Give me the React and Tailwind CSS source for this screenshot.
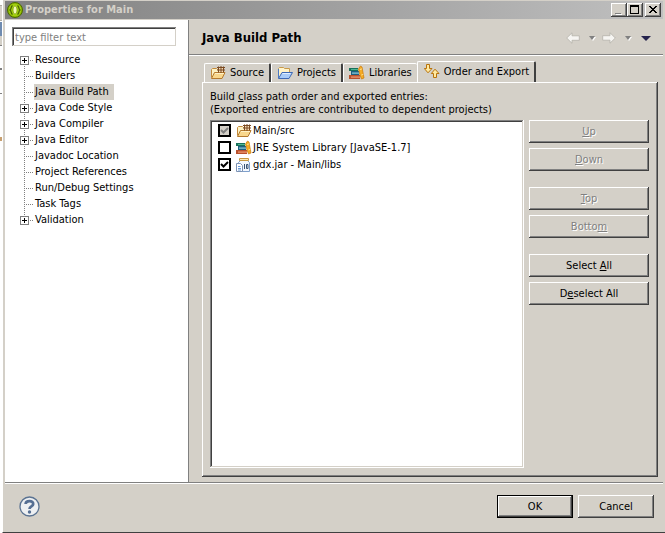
import React, { useState } from 'react';

const raised = 'shadow-[inset_-1px_-1px_#404040,inset_1px_1px_#ffffff,inset_-2px_-2px_#808080]';
const sunken = 'shadow-[inset_-1px_-1px_#ffffff,inset_1px_1px_#808080,inset_-2px_-2px_#d4d0c8,inset_2px_2px_#404040]';

const pages = [
  { name: 'Resource', expandable: true },
  { name: 'Builders' },
  { name: 'Java Build Path' },
  { name: 'Java Code Style', expandable: true },
  { name: 'Java Compiler', expandable: true },
  { name: 'Java Editor', expandable: true },
  { name: 'Javadoc Location' },
  { name: 'Project References' },
  { name: 'Run/Debug Settings' },
  { name: 'Task Tags' },
  { name: 'Validation', expandable: true },
];

const AppIcon = () => (
  <svg width="16" height="16" viewBox="0 0 16 16" aria-hidden="true">
    <circle cx="8" cy="8" r="7.5" fill="#8db600" stroke="#4d6b00" />
    <circle cx="8" cy="8" r="6.2" fill="#a4d210" />
    <path d="M5.6 3.6C3.6 4.2 4.8 6.8 3 8c1.8 1.2 .6 3.8 2.6 4.4M10.4 3.6C12.4 4.2 11.2 6.8 13 8c-1.8 1.2-.6 3.8-2.6 4.4" fill="none" stroke="#4a6600" strokeWidth="1.3" />
    <ellipse cx="8" cy="8" rx="2" ry="4" fill="#f4fbb0" stroke="#6a8c00" strokeWidth=".6" />
  </svg>
);

const SourceIcon = () => (
  <svg width="16" height="16" viewBox="0 0 16 16" aria-hidden="true">
    <path d="M1.5 12.5v-8l1-1h4l1 1h5v3" fill="#fdf2c4" stroke="#c48a3a" />
    <path d="M1.5 13.5l3-6h10.5l-3 6z" fill="#f9d78c" stroke="#b57a2e" />
    <path d="M5 8.5h9" stroke="#fff0c4" />
    <path d="M8 2h6v5H8z" fill="#f7dcb6" />
    <path d="M8.5 1.5v6M11 1v7M13.5 1.5v6M7 2.5h8M7 5h8" fill="none" stroke="#7a4a22" />
  </svg>
);

const ProjectIcon = () => (
  <svg width="16" height="16" viewBox="0 0 16 16" aria-hidden="true">
    <path d="M1.5 12.5v-9l1-1h4l1 1h5v4" fill="#fff3c8" stroke="#c99a4a" />
    <path d="M1.5 4v9" stroke="#4c7ac4" />
    <path d="M1.5 13.5l3.5-6h10.5l-3.5 6z" fill="#a9ccf8" stroke="#3d69b5" />
    <path d="M5.5 8.5h8" stroke="#e0eeff" />
  </svg>
);

const LibraryIcon = () => (
  <svg width="16" height="16" viewBox="0 0 16 16" aria-hidden="true">
    <path d="M0 3h9v3H0z" fill="#17705a" />
    <path d="M2 4h7v1H2z" fill="#4fb592" />
    <path d="M2 6h8v4H2z" fill="#1e5f80" />
    <path d="M3 7.5h7v1.2H3z" fill="#8fd0dc" />
    <path d="M0 10h11v4H0z" fill="#b9502c" />
    <path d="M2 11.5h9v1.2H2z" fill="#ee9c74" />
    <path d="M9.5 4l2-3 1.5 1 2 11-2.5 1-1.500-4z" fill="#f5ab24" stroke="#c87808" strokeWidth=".7" />
    <path d="M11 4.5l2-.6M12.3 10l2-.6" stroke="#ffe08c" />
  </svg>
);

const OrderIcon = () => (
  <svg width="16" height="16" viewBox="0 0 16 16" aria-hidden="true">
    <path d="M2.5 .5h3v4h2.5L4 8.8 .3 4.5h2.2z" fill="#ffeaa0" stroke="#b8730c" />
    <path d="M9.5 13.5h3v-4h2.5L11 5.2 7.3 9.5h2.2z" fill="#ffeaa0" stroke="#b8730c" />
  </svg>
);

const JarIcon = () => (
  <svg width="16" height="16" viewBox="0 0 16 16" aria-hidden="true">
    <path d="M4.5 3.5L2.5 5.5v9h11v-9l-2-2z" fill="#f4f8fe" stroke="#7fa0cc" />
    <path d="M3.5 1.5h9v2h-9z" fill="#fdeab4" stroke="#c89840" />
    <path d="M.5 6.5h4l2 2v6h-6z" fill="#ffffff" stroke="#7d93b5" />
    <path d="M2 9.5h2.5M2 11.5h3M2 13h3" stroke="#6b9bd8" />
    <path d="M8.5 7v5M10.500 7.5h1.500v4h-1.500z" fill="none" stroke="#3a5474" />
  </svg>
);

const HelpIcon = () => (
  <svg width="21" height="21" viewBox="0 0 21 21" aria-hidden="true">
    <circle cx="10.5" cy="10.5" r="9.5" fill="#eef0f2" stroke="#5b7392" strokeWidth="1.3" />
    <path d="M6.6 8c.2-4 8-3.8 7.6 .1-.1 2.5-3.7 2.2-3.7 5" fill="none" stroke="#566f93" strokeWidth="2.7" />
    <circle cx="10.5" cy="16" r="1.7" fill="#566f93" />
  </svg>
);

const NavArrow = ({ flip }) => (
  <svg width="14" height="12" viewBox="0 0 14 12" className={flip ? 'rotate-180' : ''} aria-hidden="true">
    <path d="M.7 6L6 .8v3h7.3v4.5H6v3z" fill="#f6f5f2" stroke="#b4b1aa" strokeWidth=".8" />
  </svg>
);

const Caret = () => (
  <svg width="7" height="5" viewBox="0 0 7 5" aria-hidden="true">
    <path d="M1 1h6L4 5z" fill="#ffffff" />
    <path d="M0 0h6L3 4z" fill="#808080" />
  </svg>
);

const TreeGuide = ({ expandable, first, last }) => (
  <svg width="14" height="16" viewBox="0 0 14 16" shapeRendering="crispEdges" aria-hidden="true">
    <path d={first ? 'M4.5 8v8' : last ? 'M4.5 0v8' : 'M4.5 0v16'} stroke="#808080" strokeDasharray="1 1" />
    <path d="M6 8.5h7" stroke="#808080" strokeDasharray="1 1" />
    {expandable && (
      <>
        <rect x=".5" y="4.5" width="8" height="8" fill="#ffffff" stroke="#808080" />
        <path d="M2 8.5h5M4.5 6v5" stroke="#000000" />
      </>
    )}
  </svg>
);

const TitleButton = ({ label, children }) => (
  <button type="button" aria-label={label} className={`flex h-3.5 w-4 items-center justify-center bg-[#d4d0c8] ${raised}`}>
    <svg width="16" height="14" viewBox="0 0 16 14" shapeRendering="crispEdges">{children}</svg>
  </button>
);

const TitleBar = () => (
  <header className="mr-0.5 flex h-[18px] items-center bg-linear-to-r from-[#808080] to-[#c0c0c0] pr-0.5 pl-0.5">
    <AppIcon />
    <h1 className="ml-0.5 flex-1 font-bold text-[#d4d0c8]">Properties for Main</h1>
    <TitleButton label="Minimize">
      <path d="M5 11h6v1H5z" fill="#ffffff" />
      <path d="M4 10h6v1H4z" fill="#808080" />
    </TitleButton>
    <TitleButton label="Maximize">
      <path d="M3.5 3v7.5h8V3M3 3h9" fill="none" stroke="#000000" />
      <path d="M3 2h9v2H3z" fill="#000000" />
    </TitleButton>
    <div className="ml-0.5 flex">
      <TitleButton label="Close">
        <path d="M4 3h2v1h1v1h2V4h1V3h2v1h-1v1h-1v1H9v1h1v1h1v1h1v1h-2V9H9V8H7v1H6v1H4V9h1V8h1V7h1V6H6V5H5V4H4z" fill="#000000" />
      </TitleButton>
    </div>
  </header>
);

const Sidebar = ({ selected, onSelect }) => (
  <aside className="flex w-[184px] shrink-0 flex-col border-r border-[#808080] bg-white pt-[7px] pl-[7px]">
    <input
      type="text"
      aria-label="Filter"
      placeholder="type filter text"
      className={`h-5 w-[165px] bg-white px-[3px] placeholder:text-[#808080] focus:outline-none ${sunken}`}
    />
    <ul className="mt-[5px] pl-2">
      {pages.map((page, i) => (
        <li key={page.name} className="flex h-4">
          <TreeGuide expandable={page.expandable} first={i === 0} last={i === pages.length - 1} />
          <button
            type="button"
            onClick={() => onSelect(page.name)}
            className={`pr-[5px] pl-px whitespace-nowrap ${selected === page.name ? 'bg-[#d4d0c8]' : ''}`}
          >
            {page.name}
          </button>
        </li>
      ))}
    </ul>
  </aside>
);

const Tab = ({ icon, label, active, edge }) => (
  <button
    type="button"
    role="tab"
    aria-selected={!!active}
    className={`flex items-center gap-1 rounded-t-xs border-t border-l border-white pr-[5px] whitespace-nowrap ${
      active ? '-mb-px h-[22px] border-r-2 border-r-[#404040] bg-[#d4d0c8] pb-0.5 pl-1.5' : 'h-[19px] pl-[5px]'
    } ${edge ? 'border-r-2 border-r-[#404040]' : ''}`}
  >
    {icon}
    {label}
  </button>
);

const Check = ({ color }) => (
  <svg width="13" height="13" viewBox="0 0 13 13" className="pointer-events-none absolute inset-0" aria-hidden="true">
    <path d="M3 6l2.5 2.5L10 4" fill="none" stroke={color} strokeWidth="2" />
  </svg>
);

const Entry = ({ icon, label, checked, locked, onToggle }) => (
  <li className="h-[17px]">
    <label className="flex h-[17px] items-center">
      <span className="relative mr-[5px] flex">
        <input
          type="checkbox"
          checked={checked}
          disabled={locked}
          onChange={onToggle}
          className={`size-[13px] appearance-none border-2 border-black ${locked ? 'bg-[#d4d0c8]' : 'bg-white'}`}
        />
        {checked && <Check color={locked ? '#808080' : '#000000'} />}
      </span>
      {icon}
      <span className="ml-px whitespace-nowrap">{label}</span>
    </label>
  </li>
);

const SideButton = ({ children, disabled }) => (
  <button
    type="button"
    disabled={disabled}
    className={`h-[23px] w-[120px] underline-offset-1 disabled:text-[#808080] disabled:text-shadow-[1px_1px_#ffffff] ${raised}`}
  >
    {children}
  </button>
);

const OrderAndExport = () => {
  const [checked, setChecked] = useState({ src: true, jre: false, gdx: true });

  const toggle = (key) => setChecked({ ...checked, [key]: !checked[key] });

  return (
    <section className={`flex flex-1 flex-col pt-2 pr-[9px] pb-[9px] pl-2 ${raised}`}>
      <p className="leading-[13px]">
        Build <u className="underline-offset-1">c</u>lass path order and exported entries:
        <br />
        (Exported entries are contributed to dependent projects)
      </p>
      <div className="mt-1 flex flex-1 gap-[5px]">
        <ul className={`flex-1 bg-white pt-0.5 pl-2 ${sunken}`}>
          <Entry icon={<SourceIcon />} label="Main/src" checked={checked.src} locked />
          <Entry icon={<LibraryIcon />} label="JRE System Library [JavaSE-1.7]" checked={checked.jre} onToggle={() => toggle('jre')} />
          <Entry icon={<JarIcon />} label="gdx.jar - Main/libs" checked={checked.gdx} onToggle={() => toggle('gdx')} />
        </ul>
        <div className="flex flex-col gap-4">
          <div className="flex flex-col gap-[5px]">
            <SideButton disabled><u>U</u>p</SideButton>
            <SideButton disabled><u>D</u>own</SideButton>
          </div>
          <div className="flex flex-col gap-[5px]">
            <SideButton disabled><u>T</u>op</SideButton>
            <SideButton disabled>Botto<u>m</u></SideButton>
          </div>
          <div className="flex flex-col gap-[5px]">
            <SideButton>Select <u>A</u>ll</SideButton>
            <SideButton>D<u>e</u>select All</SideButton>
          </div>
        </div>
      </div>
    </section>
  );
};

// slice of the window that sits behind the dialog
const Backdrop = () => (
  <div className="flex w-0.5 shrink-0 flex-col bg-white pt-[5px]">
    <div className="h-4 border-y border-[#b0aca4] bg-[#d4d0c8]" />
    <div className="mt-px h-3.5 bg-[#6f8bb0]" />
    <div className="h-2.5 border-b border-[#808080] bg-[#d4d0c8]" />
    <div className="mt-[22px] h-0.5 bg-[#808080]" />
    <div className="mt-[23px] h-px bg-[#808080]" />
    <div className="mt-[43px] h-1 bg-[#c8a070]" />
  </div>
);

export default function App() {
  const [selected, setSelected] = useState('Java Build Path');

  return (
    <div className="flex min-h-screen bg-[#d4d0c8] font-['Tahoma','DejaVu_Sans_Condensed','DejaVu_Sans',sans-serif] text-[11px] leading-4 text-black">
      <Backdrop />
      <div className="flex flex-1 flex-col border-b border-l border-b-[#404040] border-l-white pt-px pl-0.5">
        <TitleBar />
        <div className="flex flex-1 pt-px">
          <Sidebar selected={selected} onSelect={setSelected} />
          <main className="flex flex-1 flex-col">
            <div className="mr-0.5 flex h-[35px] items-center justify-between border-b border-[#808080] pt-0.5 pr-3 pl-[13px] shadow-[0_1px_#ffffff]">
              <h2 className="text-[13px] font-bold">{selected}</h2>
              <nav className="flex items-center" aria-label="History">
                <button type="button" aria-label="Back"><NavArrow /></button>
                <button type="button" aria-label="Back history" className="ml-[9px]"><Caret /></button>
                <button type="button" aria-label="Forward" className="ml-1.5"><NavArrow flip /></button>
                <button type="button" aria-label="Forward history" className="ml-[9px]"><Caret /></button>
                <button type="button" aria-label="Menu" className="ml-[9px]">
                  <svg width="10" height="5" viewBox="0 0 10 5"><path d="M0 0h10L5 5z" fill="#25234d" /></svg>
                </button>
              </nav>
            </div>
            <div className="flex flex-1 flex-col pt-1.5 pr-[7px] pb-[5px] pl-[13px]">
              <div role="tablist" className="flex items-end pl-0.5">
                <Tab icon={<SourceIcon />} label="Source" edge />
                <Tab icon={<ProjectIcon />} label="Projects" edge />
                <Tab icon={<LibraryIcon />} label="Libraries" />
                <Tab icon={<OrderIcon />} label="Order and Export" active />
              </div>
              <OrderAndExport />
            </div>
          </main>
        </div>
        <footer className="mr-0.5 flex h-[50px] items-center justify-between border-t border-[#808080] pr-[9px] pb-0.5 pl-3.5 shadow-[inset_0_1px_#ffffff]">
          <button type="button" aria-label="Help"><HelpIcon /></button>
          <div className="flex gap-[5px]">
            <button type="submit" className={`h-[23px] w-[76px] border border-black ${raised}`}>OK</button>
            <button type="button" className={`h-[23px] w-[76px] ${raised}`}>Cancel</button>
          </div>
        </footer>
      </div>
    </div>
  );
}
